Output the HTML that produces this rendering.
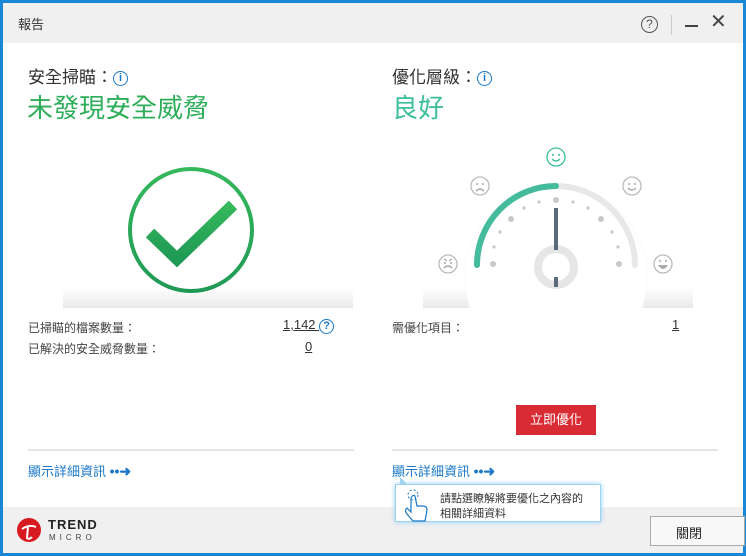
<!DOCTYPE html>
<html><head><meta charset="utf-8"><style>
*{margin:0;padding:0;box-sizing:border-box}
body{width:746px;height:556px;overflow:hidden;background:#1a87d6;font-family:"Liberation Sans","Noto Sans CJK TC",sans-serif;position:relative}
.win{position:absolute;left:3px;top:3px;width:740px;height:550px;background:#fff}
.title{position:absolute;left:0;top:0;width:740px;height:40px;background:#f0f0f0}
.abs{position:absolute;white-space:nowrap}
.foot{position:absolute;left:0;top:504px;width:740px;height:46px;background:#f0f0f0}
.info{display:inline-block;width:15px;height:15px;border:1.5px solid #1a78c8;border-radius:50%;color:#1a78c8;font-size:11px;text-align:center;line-height:12px;font-weight:bold;vertical-align:2px}
.lbl{font-size:12px;color:#444}
.link{font-size:13px;color:#1a78c8}
</style></head><body>
<div class="win">
<div class="title">
<div class="abs" style="left:15px;top:11px;font-size:13px;color:#333">報告</div>
<div class="abs" style="left:638px;top:13px;width:17px;height:17px;border:1.5px solid #555;border-radius:50%;font-size:12px;text-align:center;line-height:14px;color:#555">?</div>
<div class="abs" style="left:668px;top:12px;width:1px;height:20px;background:#ccc"></div>
<div class="abs" style="left:682px;top:22px;width:13px;height:2px;background:#444"></div>
<div class="abs" style="left:707px;top:9px;font-size:20px;color:#444;line-height:20px">✕</div>
</div>

<div class="abs" style="left:25px;top:60px;font-size:17px;color:#333">安全掃瞄：<span class="info">i</span></div>
<div class="abs" style="left:24px;top:85px;font-size:26px;color:#2eae5a">未發現安全威脅</div>
<div class="abs" style="left:389px;top:60px;font-size:17px;color:#333">優化層級：<span class="info">i</span></div>
<div class="abs" style="left:389px;top:85px;font-size:26px;color:#3cbf9a">良好</div>

<svg class="abs" style="left:0;top:0" width="740" height="510">
<defs>
<linearGradient id="sh" x1="0" y1="0" x2="0" y2="1"><stop offset="0" stop-color="#fff"/><stop offset="1" stop-color="#e8e8e8"/></linearGradient>
<linearGradient id="cg" x1="0" y1="0" x2="0" y2="1"><stop offset="0" stop-color="#35b85c"/><stop offset="1" stop-color="#1f9a55"/></linearGradient>
<radialGradient id="gs" cx="0.5" cy="0.5" r="0.5"><stop offset="0.9" stop-color="#e0e0e0"/><stop offset="1" stop-color="#fff" stop-opacity="0"/></radialGradient>
</defs>
<rect x="60" y="285" width="290" height="20" fill="url(#sh)"/>
<rect x="420" y="285" width="270" height="20" fill="url(#sh)"/>
<circle cx="188" cy="227" r="61" fill="none" stroke="url(#cg)" stroke-width="4"/>
<polyline points="147,230 174,256 230,202" fill="none" stroke="url(#cg)" stroke-width="12"/>
<circle cx="553" cy="275" r="95" fill="url(#gs)"/>
<circle cx="553" cy="275" r="91" fill="#fff"/>
<rect x="380" y="305" width="350" height="140" fill="#fff"/>
<path d="M474 262 A79 79 0 0 1 632 262" fill="none" stroke="#e8e8e8" stroke-width="6" stroke-linecap="round"/>
<path d="M474 262 A79 79 0 0 1 553 183" fill="none" stroke="#44bb9c" stroke-width="6" stroke-linecap="round"/>
<g fill="#c8c8c8">
<circle cx="553" cy="197" r="3"/><circle cx="508" cy="216" r="3"/><circle cx="598" cy="216" r="3"/>
<circle cx="490" cy="261" r="3"/><circle cx="616" cy="261" r="3"/>
<circle cx="536" cy="199" r="1.6"/><circle cx="570" cy="199" r="1.6"/><circle cx="521" cy="205" r="1.6"/><circle cx="585" cy="205" r="1.6"/>
<circle cx="497" cy="229" r="1.6"/><circle cx="609" cy="229" r="1.6"/><circle cx="491" cy="244" r="1.6"/><circle cx="615" cy="244" r="1.6"/>
</g>
<circle cx="553" cy="264" r="18" fill="none" stroke="#e6e6e6" stroke-width="8"/>
<rect x="551" y="205" width="4" height="42" fill="#5a6a7a"/>
<rect x="551" y="274" width="4" height="10" fill="#5a6a7a"/>
<g fill="none" stroke-width="1.3">
<circle cx="553" cy="154" r="9" stroke="#3cbf9a"/>
<circle cx="477" cy="183" r="9" stroke="#bbb"/>
<circle cx="629" cy="183" r="9" stroke="#bbb"/>
<circle cx="445" cy="261" r="9" stroke="#bbb"/>
<circle cx="660" cy="261" r="9" stroke="#bbb"/>
<path d="M549 156 Q553 160 557 156" stroke="#3cbf9a"/>
<path d="M473 188 Q477 184 481 188" stroke="#aaa"/>
<path d="M625 185 Q629 189 633 185" stroke="#aaa"/>
<path d="M441 265 Q445 261 449 265 M441 256 L444 258 M449 256 L446 258" stroke="#aaa"/>
</g>
<g fill="#3cbf9a"><circle cx="550" cy="152" r="1"/><circle cx="556" cy="152" r="1"/></g>
<g fill="#aaa"><circle cx="474" cy="181" r="1"/><circle cx="480" cy="181" r="1"/><circle cx="626" cy="181" r="1"/><circle cx="632" cy="181" r="1"/><circle cx="442" cy="260" r="1"/><circle cx="448" cy="260" r="1"/><circle cx="657" cy="258" r="1"/><circle cx="663" cy="258" r="1"/><path d="M655 262 L665 262 Q660 270 655 262Z"/></g>
<line x1="25" y1="447" x2="351" y2="447" stroke="#ccc"/>
<line x1="389" y1="447" x2="715" y2="447" stroke="#ccc"/>
</svg>

<div class="abs lbl" style="left:25px;top:316px">已掃瞄的檔案數量：</div>
<div class="abs" style="left:280px;top:314px;font-size:13px;color:#333;text-decoration:underline">1,142 <span class="info" style="text-decoration:none;vertical-align:0">?</span></div>
<div class="abs lbl" style="left:25px;top:337px">已解決的安全威脅數量：</div>
<div class="abs" style="left:302px;top:336px;font-size:13px;color:#333;text-decoration:underline">0</div>
<div class="abs lbl" style="left:389px;top:316px">需優化項目：</div>
<div class="abs" style="left:669px;top:314px;font-size:13px;color:#333;text-decoration:underline">1</div>

<div class="abs" style="left:513px;top:402px;width:80px;height:30px;background:#d92b33;color:#fff;font-size:13px;text-align:center;line-height:30px">立即優化</div>

<div class="abs link" style="left:25px;top:458px">顯示詳細資訊 <b style="font-size:14px">••➜</b></div>
<div class="abs link" style="left:389px;top:458px">顯示詳細資訊 <b style="font-size:14px">••➜</b></div>

<div class="foot">
<svg class="abs" style="left:13px;top:10px" width="26" height="26"><circle cx="13" cy="13" r="12" fill="#d71920"/><path d="M6 12 Q13 7 20 10 M12 9 L11 21 Q13 23 16 20" stroke="#fff" stroke-width="2" fill="none"/></svg>
<div class="abs" style="left:45px;top:10px;font-size:13px;font-weight:bold;color:#222;letter-spacing:1px">TREND</div>
<div class="abs" style="left:46px;top:26px;font-size:8px;color:#444;letter-spacing:4px">MICRO</div>
<div class="abs" style="left:647px;top:9px;width:95px;height:30px;border:1px solid #aaa;background:#f8f8f8;font-size:13px;color:#222;padding:6px 0 0 25px">關閉</div>
</div>

<div class="abs" style="left:392px;top:481px;width:206px;height:38px;background:#fff;border:1px solid #9fd4f0;box-shadow:0 0 5px #8fcdf0"></div>
<div class="abs" style="left:397px;top:474px;width:0;height:0;border-right:8px solid transparent;border-bottom:8px solid #9fd4f0"></div>
<svg class="abs" style="left:398px;top:485px" width="30" height="36"><path d="M10 10 L10 24 L6 20 Q3 22 6 26 L12 33 L24 33 L26 22 Q26 18 22 18 L16 18 L14 8 Q12 6 10 10Z" fill="#fff" stroke="#1a78c8" stroke-width="1.2"/><circle cx="12" cy="7" r="5" fill="none" stroke="#1a78c8" stroke-dasharray="2 2"/></svg>
<div class="abs" style="left:437px;top:489px;font-size:11px;color:#333;line-height:15px">請點選瞭解將要優化之內容的<br>相關詳細資料</div>
</div>
</body></html>
